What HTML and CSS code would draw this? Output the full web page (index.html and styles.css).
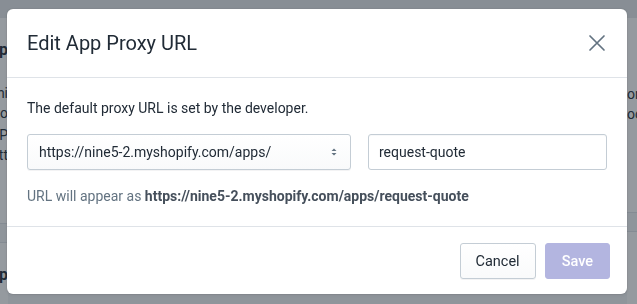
FILE: index.html
```html
<!DOCTYPE html>
<html lang="en">

<head>
  <meta charset="UTF-8">
  <meta name="viewport" content="width=device-width, initial-scale=1.0">
  <title>Edit App Proxy URL</title>
  <link rel="stylesheet" href="styles.css">
</head>

<body>
  <div class="page">
    <div class="topbar"></div>
    <div class="layout">
      <div class="edge left">
        <p class="h">App setup</p>
        <p class="t r1">Thi</p>
        <p class="t r2">Ro</p>
        <p class="t r3">URL P</p>
        <p class="t r4">Att</p>
        <div class="sep"></div>
        <p class="h low">App setup</p>
      </div>
      <div class="gap"></div>
      <div class="edge right">
        <p class="t first">on</p>
        <p class="t">oc</p>
        <div class="sep"></div>
      </div>
    </div>
  </div>

  <div class="overlay"></div>

  <div class="modal">
    <div class="modal-header">
      <h2>Edit App Proxy URL</h2>
      <a href="###" class="close">
        <svg width="18" height="18" viewBox="0 0 18 18">
          <path d="M2 2 L16 16 M16 2 L2 16" stroke="#637381" stroke-width="1.7" fill="none" stroke-linecap="round" />
        </svg>
      </a>
    </div>
    <div class="modal-body">
      <p>The default proxy URL is set by the developer.</p>
      <div class="fields">
        <div class="select">
          <span>https://nine5-2.myshopify.com/apps/</span>
          <svg width="8" height="12" viewBox="0 0 8 12">
            <path d="M4 2.5 L6.5 5 H1.5 Z M4 9.5 L6.5 7 H1.5 Z" fill="#637381" />
          </svg>
        </div>
        <div class="input">request-quote</div>
      </div>
      <p class="hint">URL will appear as <b>https://nine5-2.myshopify.com/apps/request-quote</b></p>
    </div>
    <div class="modal-footer">
      <a href="###" class="btn">Cancel</a>
      <a href="###" class="btn primary">Save</a>
    </div>
  </div>
</body>

</html>
```

FILE: styles.css
```css
* {
  margin: 0;
  padding: 0;
  box-sizing: border-box;
}

body {
  font-family: Roboto, "Noto Sans", sans-serif;
  font-size: 14px;
  color: #212b36;
  background: #f4f6f8;
  width: 637px;
  height: 304px;
  overflow: hidden;
}

a {
  text-decoration: none;
  color: inherit;
}

.page {
  height: 304px;
}

.topbar {
  height: 18px;
  background: #e6e9ec;
}

.layout {
  display: flex;
  height: 286px;
}

.edge {
  width: 8px;
  background: #fff;
  display: flex;
  flex-direction: column;
  align-items: flex-end;
  overflow: hidden;
}

.edge p {
  white-space: nowrap;
  line-height: 20px;
}

.edge .h {
  font-weight: 700;
  font-size: 16px;
  margin-top: 22px;
}

.edge .h.low {
  margin-top: 22px;
}

.edge .r1 {
  margin-top: 23px;
}

.edge .r3 {
  margin-top: 2px;
}

.edge .sep {
  align-self: stretch;
  height: 20px;
  margin-top: 58px;
  background: #f4f6f8;
  border-top: 1px solid #dfe3e8;
  border-bottom: 1px solid #dfe3e8;
  flex-shrink: 0;
}

.edge.right {
  width: 10px;
  align-items: flex-start;
}

.edge.right .first {
  margin-top: 66px;
}

.edge.right .sep {
  margin-top: 88px;
}

.gap {
  flex: 1;
}

.overlay {
  position: fixed;
  inset: 0;
  background: rgba(33, 43, 54, 0.48);
}

.modal {
  position: fixed;
  left: 7px;
  top: 9px;
  width: 620px;
  background: #fff;
  border-radius: 6px;
  box-shadow: 0 0 0 1px rgba(63, 63, 68, 0.05), 0 1px 3px rgba(63, 63, 68, 0.15);
}

.modal-header {
  display: flex;
  align-items: center;
  justify-content: space-between;
  padding: 20px;
  border-bottom: 1px solid #dfe3e8;
}

.modal-header h2 {
  font-size: 20px;
  font-weight: 400;
  line-height: 28px;
}

.close {
  display: flex;
  width: 18px;
  height: 18px;
  margin-right: 1px;
}

.modal-body {
  padding: 20px;
}

.modal-body p {
  line-height: 20px;
}

.fields {
  display: grid;
  grid-template-columns: 324px 1fr;
  gap: 17px;
  margin-top: 16px;
}

.select,
.input {
  height: 36px;
  border: 1px solid #c4cdd5;
  border-radius: 3px;
  display: flex;
  align-items: center;
  font-size: 14px;
}

.select {
  justify-content: space-between;
  padding: 0 12px 0 11px;
  background: linear-gradient(to bottom, #fff, #f9fafb);
  box-shadow: 0 1px 0 rgba(22, 29, 37, 0.05);
}

.input {
  padding: 0 10px;
  background: #fff;
  box-shadow: inset 0 1px 0 rgba(99, 115, 129, 0.05);
}

.modal-body .hint {
  margin-top: 16px;
  color: #637381;
}

.hint b {
  color: #454f5b;
}

.modal-footer {
  display: flex;
  justify-content: flex-end;
  gap: 9px;
  padding: 16px 17px 15px 20px;
  border-top: 1px solid #dfe3e8;
}

.btn {
  height: 36px;
  padding: 0 16px;
  display: flex;
  align-items: center;
  font-size: 14.5px;
  border: 1px solid #c4cdd5;
  border-radius: 3px;
  background: linear-gradient(to bottom, #fff, #f9fafb);
  box-shadow: 0 1px 0 rgba(22, 29, 37, 0.05);
}

.btn:first-child {
  padding: 0 15px;
}

.btn.primary {
  padding: 0 16px;
  color: #fff;
  font-weight: 500;
  background: #b3b5e0;
  border-color: #b3b5e0;
  box-shadow: none;
}
```
